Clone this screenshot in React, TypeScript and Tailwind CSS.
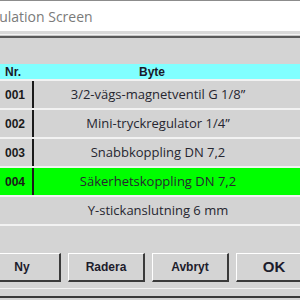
import React from "react";

const rows: { nr: string; text: string; active?: boolean }[] = [
  { nr: "001", text: "3/2-vägs-magnetventil G 1/8”" },
  { nr: "002", text: "Mini-tryckregulator 1/4”" },
  { nr: "003", text: "Snabbkoppling DN 7,2" },
  { nr: "004", text: "Säkerhetskoppling DN 7,2", active: true },
  { nr: "", text: "Y-stickanslutning 6 mm" },
];

const buttons = ["Ny", "Radera", "Avbryt", "OK"];

export default function App() {
  return (
    <div className="w-[300px] h-[300px] overflow-hidden bg-[#d4d4d4] flex flex-col">
      <div className="h-px bg-[#8c8c8c]" />
      <div className="h-[30px] bg-white flex items-center">
        <span
          className="-ml-[25px] text-[14px] leading-[19px] text-[#7a7a7a] whitespace-nowrap"
          style={{ fontFamily: '"Open Sans", sans-serif' }}
        >
          Simulation Screen
        </span>
      </div>
      <div className="h-[3px] bg-[#d9d9d9]" />
      <div className="h-px bg-[#f4f4f4]" />
      <div className="h-px bg-[#c8c8c8]" />
      <div className="h-[2px] bg-[#5a5a5a]" />
      <div className="h-[26px]" />
      <div
        className="h-[15px] bg-[#80ffff] flex items-center text-[12px] font-bold text-[#1a1a2a]"
        style={{ fontFamily: '"Liberation Sans", Arial, sans-serif' }}
      >
        <div className="w-[34px] pl-[5px]">Nr.</div>
        <div className="flex-1 text-center pr-[30px]">Byte</div>
      </div>
      {rows.map((r, i) => (
        <div
          key={i}
          className={`h-[29px] border-t-2 border-[#f2f2f2] flex ${r.active ? "bg-[#00ff00]" : "bg-[#d3d3d3]"}`}
        >
          <div
            className="w-[32px] pl-[5px] flex items-center text-[12px] font-bold text-[#1a1a1a]"
            style={{ fontFamily: '"Liberation Sans", Arial, sans-serif' }}
          >
            {r.nr}
          </div>
          <div className={`w-[2px] ${r.nr ? "bg-[#1a1a1a]" : ""}`} />
          <div
            className="flex-1 flex items-center justify-center pr-[18px] text-[13px] text-[#262630] whitespace-nowrap"
            style={{ fontFamily: '"Open Sans", sans-serif' }}
          >
            {r.text}
          </div>
        </div>
      ))}
      <div className="h-[2px] bg-[#f2f2f2]" />
      <div className="h-[27px]" />
      <div className="h-[29px] flex gap-[7px] -ml-[16px]">
        {buttons.map((b) => (
          <div
            key={b}
            className={`w-[77px] shrink-0 flex items-center justify-center border-t border-l border-white border-b-2 border-r-2 border-b-[#3a3a3a] border-r-[#3a3a3a] font-bold text-[#1c1c2c] ${b === "OK" ? "text-[15px]" : "text-[12px]"}`}
            style={{ fontFamily: '"Liberation Sans", Arial, sans-serif' }}
          >
            {b}
          </div>
        ))}
      </div>
      <div className="h-[6px]" />
      <div className="h-px bg-[#f2f2f2]" />
      <div className="h-[7px]" />
      <div className="h-[2px] bg-[#3a3a3a]" />
    </div>
  );
}
